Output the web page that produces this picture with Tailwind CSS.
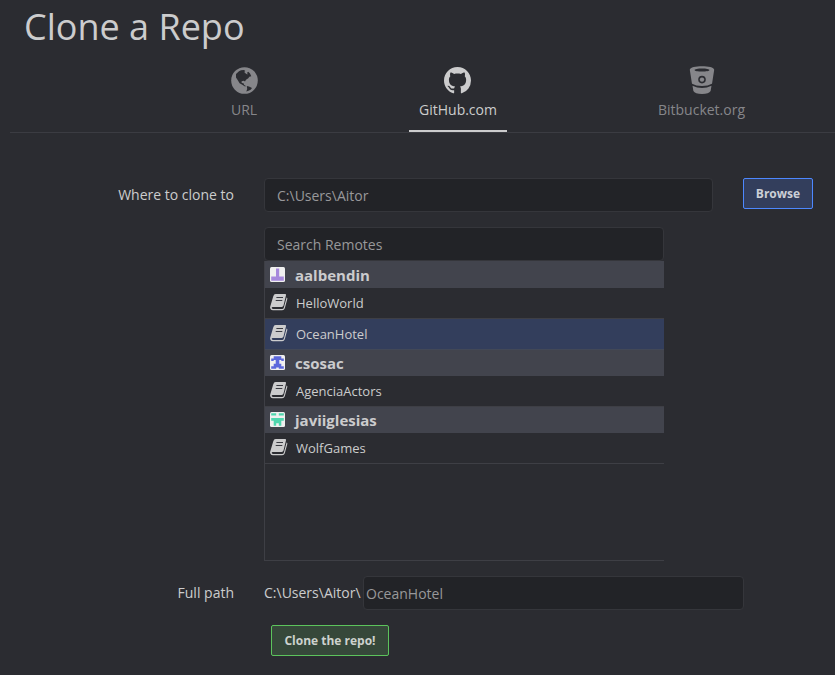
<!DOCTYPE html>
<html lang="en">
<head>
<meta charset="utf-8">
<title>Clone a Repo</title>
<script src="https://cdn.jsdelivr.net/npm/@tailwindcss/browser@4"></script>
</head>
<body class="bg-[#2b2c31] text-[#cccccd] font-['Open_Sans','Noto_Sans',sans-serif] text-sm">
<svg class="hidden">
  <symbol id="book" viewBox="0 0 18 17">
    <path d="M5.600 0H15.200Q16.200 .1 16 1.200L13.500 11.600Q13.100 13 11.700 13H2.600Q1.500 13.200 1.800 14.200Q2.100 15 3.200 15H12.200Q13.400 15 13.800 13.800L16.600 3.400Q17.600 3.800 17.300 4.900L14.800 14.300Q14.100 16.300 12.200 16.300H2.800Q.7 16.300 .2 14.200Q-.1 13.200 .4 12L3.200 2.400Q3.900 0 5.600 0Z" fill="currentColor"/>
    <path d="M6.400 3.500H13M5.700 6.500H12.300" class="stroke-[#3a3b42]" stroke-width="1"/>
  </symbol>
</svg>
<div class="flex h-[675px] w-[835px] flex-col overflow-hidden">
  <h1 class="h-[66px] pl-6 pt-[2px] text-[36px] leading-[50px]">Clone a Repo</h1>
  <nav class="ml-[10px] flex h-[67px] border-b border-[#3b3c42] font-medium text-[#86868a]">
    <div class="ml-[209px] flex w-[50px] flex-col items-center">
      <svg class="mt-[1px] size-[27px]" viewBox="0 0 27 27"><circle cx="13.5" cy="13.5" r="13.3" fill="currentColor"/><path class="fill-[#2b2c31]" d="M5 7L8 4.200L10 3.200L13 3.100L14.300 4L13.200 5L15 6.800L16.500 7.600L16.200 5.600L17.300 4.800L19 6.500L20.300 9.200L18.300 9.800L17.300 11.200L15 12.800L14 14.600L12.800 13.800L10.600 14.200L10.700 16L12.500 16.200L13.200 18L15 19L14 19.500L11.300 17.800L8.600 16.200L6.800 13.300L5 10.500ZM15.800 19L18 19.500L21 21L19.600 22.800L17.500 23.800L15.300 24.600L16.200 22Z"/></svg>
      <span class="mt-[6px] leading-5">URL</span>
    </div>
    <div class="-mb-px ml-[140px] flex h-[66px] w-[98px] flex-col items-center border-b-2 border-[#cccccd] text-[#cccccd]">
      <svg class="mr-px mt-[1px] h-[27px] w-[27px]" viewBox="0 0 16 16"><path fill="currentColor" d="M8 0C3.58 0 0 3.58 0 8c0 3.54 2.29 6.53 5.47 7.59.4.07.55-.17.55-.38 0-.19-.01-.82-.01-1.49-2.01.37-2.53-.49-2.69-.94-.09-.23-.48-.94-.82-1.13-.28-.15-.68-.52-.01-.53.63-.01 1.08.58 1.23.82.72 1.21 1.87.87 2.33.66.07-.52.28-.87.51-1.07-1.78-.2-3.64-.89-3.64-3.95 0-.87.31-1.59.82-2.15-.08-.2-.36-1.02.08-2.12 0 0 .67-.21 2.2.82.64-.18 1.32-.27 2-.27s1.36.09 2 .27c1.53-1.04 2.2-.82 2.2-.82.44 1.1.16 1.92.08 2.12.51.56.82 1.27.82 2.15 0 3.07-1.87 3.75-3.65 3.95.29.25.54.73.54 1.48 0 1.07-.01 1.93-.01 2.2 0 .21.15.46.55.38A8.01 8.01 0 0 0 16 8c0-4.42-3.58-8-8-8Z"/></svg>
      <span class="mt-[6px] leading-5">GitHub.com</span>
    </div>
    <div class="ml-[145px] flex w-[99px] flex-col items-center">
      <svg class="h-7 w-[26px]" viewBox="0 0 26 28"><path fill="currentColor" fill-rule="evenodd" d="M13 .3C19 .3 25.200 1.300 25.200 3.800L23 18C21.500 20 17 20.500 13 20.500S4.500 20 3 18L.8 3.800C.8 1.300 7 .3 13 .3ZM13 2.400C9 2.400 5.500 3 5.500 4S9 5.500 13 5.500S20.500 5 20.500 4S17 2.400 13 2.400ZM13 9.800A3.800 3.800 0 1 0 13 17.400A3.800 3.800 0 1 0 13 9.800Z"/><circle cx="13" cy="13.6" r="2.2" fill="currentColor"/><path class="fill-[#2b2c31]" d="M2.500 17.500Q7 20 13 20T23.500 17.500V19.800Q18 22 13 22T2.500 19.800Z"/><path fill="currentColor" d="M3.500 19.800Q8 22 13 22T22.500 19.800L21.600 25Q20 27.900 13 27.900T4.400 25Z"/></svg>
      <span class="mt-[6px] leading-5">Bitbucket.org</span>
    </div>
  </nav>
  <main class="flex flex-col pt-[45px]">
    <div class="flex h-[49px] items-start">
      <label class="w-[234px] pt-[7px] text-right leading-5">Where to clone to</label>
      <div class="ml-[30px] h-[34px] w-[449px] rounded border border-[#35363b] bg-[#222327] pl-3 leading-[34px] text-[#98989a]">C:\Users\Aitor</div>
      <button class="ml-[30px] h-[31px] w-[70px] rounded-[2px] border border-[#4d88ff] bg-[#333e5c] text-xs font-bold text-[#cccfd6]">Browse</button>
    </div>
    <div class="ml-[264px] w-[400px]">
      <div class="h-[34px] rounded border border-[#35363b] bg-[#222327] pl-3 leading-[34px] text-[#98989a]">Search Remotes</div>
      <div class="flex h-[300px] flex-col border-b border-l border-[#3e3f45] text-[13px]">
        <div class="flex h-[27px] items-center bg-[#42444d] pl-[5px] text-[15px] font-bold">
          <svg class="size-[15px]" viewBox="0 0 15 15"><rect width="15" height="15" rx="1.500" fill="#f0f0f0"/><path fill="#a688dc" d="M6 1.500h3.200V9.500h4.600v4.200H1.200V9.500H6Z"/></svg>
          <span class="ml-[10px] mt-[3px]">aalbendin</span>
        </div>
        <div class="flex h-[31px] items-center border-b border-[#3e3f45] pl-[5px]"><svg class="mb-px h-[17px] w-[18px]"><use href="#book"/></svg><span class="ml-2">HelloWorld</span></div>
        <div class="flex h-[31px] items-center border-b border-[#424857] bg-[#333e5c] pl-[5px]"><svg class="mb-px h-[17px] w-[18px]"><use href="#book"/></svg><span class="ml-2">OceanHotel</span></div>
        <div class="flex h-[26px] items-center bg-[#42444d] pl-[5px] text-[15px] font-bold">
          <svg class="mb-px size-[15px]" viewBox="0 0 15 15"><rect width="15" height="15" rx="1.500" fill="#f0f0f0"/><path fill="#5c68dc" d="M3.700 1.200h7.600V3.600h2.500v2.500H11.300V5H9.300v3.700h2v2.500h2.500v2.600H8.800v-1.300H6.200v1.300H1.200v-2.600H3.700V8.700h2V5H3.700v1.100H1.200V3.600H3.700Z"/></svg>
          <span class="ml-[10px] mt-[2px]">csosac</span>
        </div>
        <div class="flex h-[31px] items-center border-b border-[#3e3f45] pl-[5px]"><svg class="mb-px h-[17px] w-[18px]"><use href="#book"/></svg><span class="ml-2">AgenciaActors</span></div>
        <div class="flex h-[26px] items-center bg-[#42444d] pl-[5px] text-[15px] font-bold">
          <svg class="mb-px size-[15px]" viewBox="0 0 15 15"><rect width="15" height="15" rx="1.500" fill="#f0f0f0"/><path fill="#4fd6ae" d="M1.200 1.200H6.200V3.600H1.200ZM8.800 1.200h5V3.600H8.800ZM1.200 6h12.600v2.700H11.300v5.100H8.800V11.200H6.200v2.600H3.700V8.700H1.200Z"/></svg>
          <span class="ml-[10px] mt-[2px]">javiiglesias</span>
        </div>
        <div class="flex h-[31px] items-center border-b border-[#3e3f45] pl-[5px]"><svg class="mb-px h-[17px] w-[18px]"><use href="#book"/></svg><span class="ml-2">WolfGames</span></div>
      </div>
    </div>
    <div class="mt-[15px] flex h-[49px] items-start">
      <label class="w-[234px] pt-[7px] text-right leading-5">Full path</label>
      <span class="ml-[30px] w-[99px] pt-[7px] leading-5">C:\Users\Aitor\</span>
      <div class="h-[34px] w-[381px] rounded border border-[#35363b] bg-[#222327] pl-[2px] leading-[34px] text-[#98989a]">OceanHotel</div>
    </div>
    <button class="ml-[271px] h-[31px] w-[118px] rounded-[2px] border border-[#5cc45c] bg-[#36483a] text-xs font-bold text-[#cdd2ce]">Clone the repo!</button>
  </main>
</div>
</body>
</html>
